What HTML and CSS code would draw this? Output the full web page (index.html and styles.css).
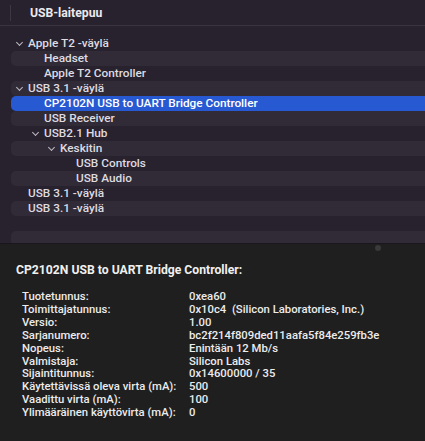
FILE: index.html
```html
<!DOCTYPE html>
<html lang="fi">
<head>
<meta charset="utf-8">
<title>USB-laitepuu</title>
<link rel="stylesheet" href="styles.css">
</head>
<body>
<div class="window">
  <section class="sidebar">
    <header class="header">
      <span class="sep"></span>
      <span class="title">USB-laitepuu</span>
    </header>
    <ul class="tree">
      <li class="row l0"><span class="chev"></span>Apple T2 -väylä</li>
      <li class="row l1 alt">Headset</li>
      <li class="row l1">Apple T2 Controller</li>
      <li class="row l0 alt"><span class="chev"></span>USB 3.1 -väylä</li>
      <li class="row l1 sel">CP2102N USB to UART Bridge Controller</li>
      <li class="row l1 alt">USB Receiver</li>
      <li class="row l1"><span class="chev"></span>USB2.1 Hub</li>
      <li class="row l2 alt"><span class="chev"></span>Keskitin</li>
      <li class="row l3">USB Controls</li>
      <li class="row l3 alt">USB Audio</li>
      <li class="row l0">USB 3.1 -väylä</li>
      <li class="row l0 alt">USB 3.1 -väylä</li>
      <li class="row l0"></li>
      <li class="row l0 alt"></li>
    </ul>
  </section>
  <section class="details">
    <span class="knob"></span>
    <h2 class="dtitle">CP2102N USB to UART Bridge Controller:</h2>
    <dl class="props">
      <dt>Tuotetunnus:</dt><dd>0xea60</dd>
      <dt>Toimittajatunnus:</dt><dd>0x10c4 &nbsp;(Silicon Laboratories, Inc.)</dd>
      <dt>Versio:</dt><dd>1.00</dd>
      <dt>Sarjanumero:</dt><dd>bc2f214f809ded11aafa5f84e259fb3e</dd>
      <dt>Nopeus:</dt><dd>Enintään 12 Mb/s</dd>
      <dt>Valmistaja:</dt><dd>Silicon Labs</dd>
      <dt>Sijaintitunnus:</dt><dd>0x14600000 / 35</dd>
      <dt>Käytettävissä oleva virta (mA):</dt><dd>500</dd>
      <dt>Vaadittu virta (mA):</dt><dd>100</dd>
      <dt>Ylimääräinen käyttövirta (mA):</dt><dd>0</dd>
    </dl>
  </section>
</div>
</body>
</html>
```
FILE: styles.css
```css
* { box-sizing: border-box; }
html, body {
  margin: 0;
  padding: 0;
  background: #1e1e1e;
}
body {
  font-family: Roboto, "Liberation Sans", Arial, sans-serif;
  color: #e6e3e8;
  -webkit-font-smoothing: antialiased;
}
.window {
  width: 425px;
  height: 441px;
  overflow: hidden;
  display: flex;
  flex-direction: column;
}
.sidebar {
  height: 243px;
  flex: none;
  background: #28222e;
  overflow: hidden;
}
.header {
  height: 26px;
  border-bottom: 1px solid #3a3441;
  display: flex;
  align-items: center;
  padding-left: 10px;
}
.sep {
  width: 1px;
  height: 16px;
  background: #3d3744;
  margin-right: 19px;
}
.title {
  font-weight: 700;
  font-size: 12.2px;
  color: #ece9ee;
}
.tree {
  list-style: none;
  margin: 10px 0 0 0;
  padding: 0;
}
.row {
  height: 15px;
  line-height: 15px;
  margin-left: 11px;
  margin-right: -10px;
  border-radius: 5px;
  font-size: 11.8px;
  font-weight: 500;
  color: #dedbe1;
  position: relative;
  white-space: nowrap;
}
.row.alt { background: #312b37; }
.row.sel { background: #2759d2; color: #ffffff; }
.l0 { padding-left: 17px; }
.l1 { padding-left: 33px; }
.l2 { padding-left: 49px; }
.l3 { padding-left: 65px; }
.chev {
  position: absolute;
  top: 4px;
  width: 5px;
  height: 5px;
  border-right: 1.4px solid #bdb9c2;
  border-bottom: 1.4px solid #bdb9c2;
  transform: rotate(45deg);
}
.l0 .chev { left: 6px; }
.l1 .chev { left: 22px; }
.l2 .chev { left: 38px; }
.details {
  flex: 1;
  position: relative;
  background: #1f1f1f;
  border-top: 1px solid #19171b;
  padding: 20px 0 0 16px;
}
.knob {
  position: absolute;
  left: 375px;
  top: 1px;
  width: 6px;
  height: 6px;
  border-radius: 50%;
  background: #3a3a3a;
}
.dtitle {
  margin: 0 0 14px 0;
  font-size: 12.2px;
  font-weight: 700;
  line-height: 13px;
  color: #f0f0f0;
}
.props {
  margin: 0 0 0 6px;
  display: grid;
  grid-template-columns: 167px 1fr;
  font-size: 11.3px;
  font-weight: 500;
  line-height: 12.9px;
  color: #ececec;
}
.props dt, .props dd {
  margin: 0;
  white-space: nowrap;
}
```
